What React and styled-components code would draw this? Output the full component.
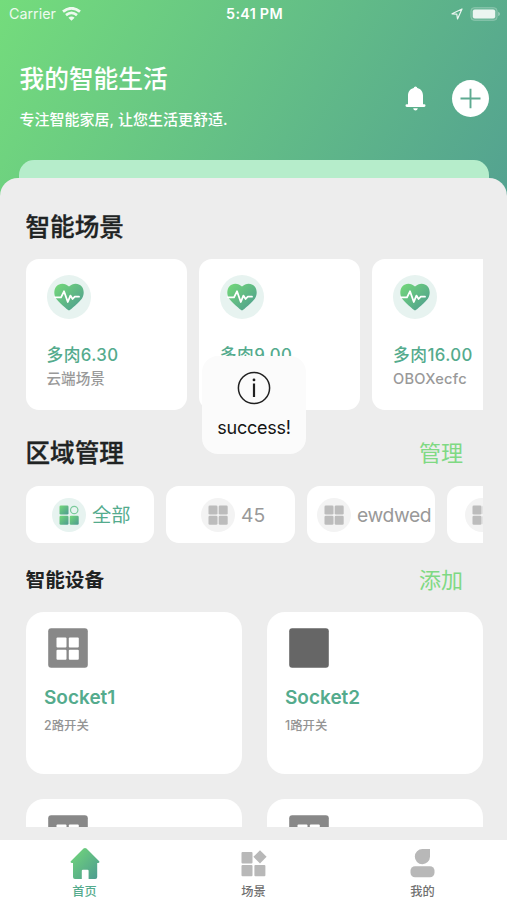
import React from "react";

import styled, { createGlobalStyle } from "styled-components";

const COLOR = {
  green: "#54ab8d",
  light: "#7fd983",
  ink: "#202323",
  gray: "#999999",
  page: "#ededed",
};

const GlobalStyle = createGlobalStyle`
  * {
    box-sizing: border-box;
  }

  body {
    margin: 0;
    font-family: Inter, "Noto Sans CJK SC", sans-serif;
    white-space: nowrap;
  }

  svg {
    display: block;
    flex-shrink: 0;
  }
`;

const Screen = styled.div`
  position: relative;
  display: flex;
  flex-direction: column;
  width: 507px;
  height: 900px;
  overflow: hidden;
  background: linear-gradient(120deg, #74dc7c 0, #54a390 530px);
`;

/* Status bar */
const StatusBar = styled.div`
  display: grid;
  grid-template-columns: 1fr auto 1fr;
  align-items: center;
  height: 28px;
  padding: 0 7px 0 9px;
  color: #fff;
  font-size: 14.3px;
  line-height: 28px;
`;

const StatusSide = styled.div`
  display: flex;
  align-items: center;
  justify-content: ${(props) => (props.$end ? "flex-end" : "flex-start")};
  gap: ${(props) => (props.$end ? "7px" : "6px")};
  opacity: 0.88;
`;

const Clock = styled.div`
  font-size: 14.3px;
  font-weight: 600;
  letter-spacing: 0.3px;
`;

/* Header */
const Header = styled.header`
  display: flex;
  justify-content: space-between;
  height: 132px;
  padding: 34px 18px 0 19.5px;
  color: #fff;
`;

const Title = styled.h1`
  margin: 0;
  font-size: 24.7px;
  font-weight: 500;
  line-height: 34px;
`;

const Slogan = styled.div`
  margin-top: 14px;
  font-size: 15px;
  font-weight: 500;
  line-height: 20px;
`;

const Actions = styled.div`
  display: flex;
  align-items: center;
  gap: 26px;
  height: 73px;
`;

const AddButton = styled.button`
  display: flex;
  align-items: center;
  justify-content: center;
  width: 37px;
  height: 37px;
  padding: 0;
  border: 0;
  border-radius: 50%;
  background: #fff;
`;

/* Sheet */
const SheetEdge = styled.div`
  height: 18px;
  margin: 0 18.5px;
  border-radius: 15px 15px 0 0;
  background: #b6edcb;
`;

const Sheet = styled.main`
  height: 662px;
  padding: 31px 24.5px 13px 25.5px;
  border-radius: 18px 18px 0 0;
  background: ${COLOR.page};
`;

const SheetBody = styled.div`
  height: 618px;
  overflow: hidden;
`;

const SectionHead = styled.div`
  display: flex;
  align-items: center;
  justify-content: space-between;
  height: 36px;
  margin-top: ${(props) => props.$top || 0}px;
  padding-right: 19.5px;
`;

const SectionTitle = styled.h2`
  margin: 0;
  color: ${COLOR.ink};
  font-size: ${(props) => (props.$small ? "19.7px" : "24.6px")};
  font-weight: ${(props) => (props.$small ? 700 : 500)};
  -webkit-text-stroke: ${(props) => (props.$small ? 0 : "0.35px")};
  line-height: 38px;
`;

const SectionLink = styled.a`
  color: ${COLOR.light};
  font-size: 22px;
  line-height: 36px;
`;

const Strip = styled.div`
  display: flex;
  gap: 12px;
  margin-top: ${(props) => props.$top}px;
  overflow: hidden;
`;

const SceneCard = styled.div`
  flex: 0 0 161.3px;
  height: 151px;
  padding: 16px 0 0 21px;
  border-radius: 13px;
  background: #fff;
`;

const Bubble = styled.div`
  display: flex;
  flex-shrink: 0;
  align-items: center;
  justify-content: center;
  width: ${(props) => props.$size}px;
  height: ${(props) => props.$size}px;
  border-radius: 50%;
  background: ${(props) => (props.$muted ? "#f3f3f3" : "#e7f3f0")};
`;

const SceneName = styled.div`
  margin-top: 24px;
  color: ${COLOR.green};
  font-size: 16.8px;
  font-weight: 500;
  letter-spacing: 0.4px;
  line-height: 24px;
`;

const SceneType = styled.div`
  margin-top: 2px;
  color: ${COLOR.gray};
  font-size: 14.6px;
  font-weight: 500;
  letter-spacing: ${(props) => (props.$wide ? "0.25px" : 0)};
  line-height: 20px;
`;

const AreaPill = styled.div`
  display: flex;
  flex: 0 0 128.5px;
  align-items: center;
  gap: 6px;
  height: 57px;
  padding-left: ${(props) => props.$inset}px;
  border-radius: 13px;
  background: #fff;
  color: ${(props) => (props.$active ? COLOR.green : COLOR.gray)};
  font-size: 19.3px;
`;

const AreaName = styled.span`
  letter-spacing: ${(props) => (props.$tight ? "-0.4px" : 0)};
  line-height: 28px;
`;

const Devices = styled.div`
  display: grid;
  grid-template-columns: 1fr 1fr;
  gap: 25px;
  margin-top: 14px;
`;

const DeviceCard = styled.div`
  height: 162px;
  padding: 16px 0 0 18.5px;
  border-radius: 18px;
  background: #fff;

  svg {
    margin-left: 4px;
  }
`;

const DeviceName = styled.div`
  margin-top: 17px;
  color: ${COLOR.green};
  font-size: 19px;
  font-weight: 600;
  line-height: 26px;
`;

const DeviceType = styled.div`
  margin-top: 6px;
  color: #949494;
  font-size: 12.4px;
  font-weight: 500;
  line-height: 18px;
`;

/* Tab bar */
const TabBar = styled.nav`
  display: grid;
  grid-template-columns: repeat(3, 1fr);
  height: 60px;
  background: #fff;
`;

const Tab = styled.div`
  display: flex;
  flex-direction: column;
  align-items: center;
  padding-top: 8px;
  color: ${(props) => (props.$active ? COLOR.green : "#707070")};
  font-size: 12.2px;
  font-weight: 500;
  line-height: 16px;
`;

const TabLabel = styled.div`
  margin-top: 3.5px;
`;

/* Toast */
const Toast = styled.div`
  position: absolute;
  top: 356px;
  left: 202px;
  display: flex;
  flex-direction: column;
  align-items: center;
  width: 104px;
  height: 98px;
  padding-top: 15px;
  border-radius: 16px;
  background: #fbfbfb;
  color: #151515;
  font-size: 18px;
  line-height: 24px;
`;

const ToastText = styled.div`
  margin-top: 11px;
  letter-spacing: -0.25px;
`;

const Gradients = () => (
  <svg width="0" height="0">
    <linearGradient id="leaf" x1="0" y1="0" x2="1" y2="1">
      <stop offset="0" stopColor="#74d979" />
      <stop offset="1" stopColor="#4c9a91" />
    </linearGradient>
  </svg>
);

const WifiIcon = () => (
  <svg width="19" height="14" viewBox="0 0 19 14" fill="none" stroke="#fff" strokeWidth="2.8">
    <path d="M1 4.6Q9.5-2 18 4.6" />
    <path d="M4 8.1Q9.5 3.7 15 8.1" />
    <path d="M6.4 10.8Q9.5 8.2 12.6 10.8L9.5 13.7Z" fill="#fff" stroke="none" />
  </svg>
);

const LocationIcon = () => (
  <svg width="12" height="12" viewBox="0 0 12 12" fill="none" stroke="#fff" strokeWidth="1.2" strokeLinejoin="round">
    <path d="M1 5.8L11 1L6.5 11L5.8 6.2Z" />
  </svg>
);

const BatteryIcon = () => (
  <svg width="30" height="14" viewBox="0 0 30 14">
    <rect x="0.8" y="0.6" width="26.4" height="12.8" rx="3.5" fill="#fff" fillOpacity="0.15" stroke="#fff" strokeOpacity="0.25" />
    <rect x="2.8" y="2.4" width="22.4" height="9.2" rx="2" fill="#fff" />
    <path d="M28.2 4.8Q30 5.5 30 7T28.2 9.2Z" fill="#fff" fillOpacity="0.45" />
  </svg>
);

const BellIcon = () => (
  <svg width="21" height="25" viewBox="0 0 21 25" fill="#fff">
    <path d="M10.5 0.4a1.8 1.8 0 0 1 1.8 1.6C16 3 18 5.8 18 9.5v8.8h1.2a1.3 1.3 0 0 1 0 2.6H1.8a1.3 1.3 0 0 1 0-2.6H3V9.5C3 5.8 5 3 8.7 2A1.8 1.8 0 0 1 10.5 0.4Z" />
    <path d="M8.2 22.2h4.6q-0.4 2.2-2.3 2.2t-2.3-2.2Z" />
  </svg>
);

const PlusIcon = () => (
  <svg width="21" height="21" viewBox="0 0 21 21" stroke="#5eaa91" strokeWidth="1.9">
    <path d="M10.5 0.8V20.2M0.5 10.5H20.5" />
  </svg>
);

const HeartIcon = () => (
  <svg width="30" height="28" viewBox="0 0 30 28">
    <path
      d="M15 27.4C13.7 27.4 3.8 18.3 2 15.5C-0.3 12-0.3 6.8 2.3 3.5C5.5-0.4 11.5-0.1 15 3.6C18.5-0.1 24.5-0.4 27.7 3.5C30.3 6.8 30.3 12 28 15.5C26.2 18.3 16.3 27.4 15 27.4Z"
      fill="url(#leaf)"
    />
    <path
      d="M1 14.3H7L10 8.3L13.8 19L16.4 12.6L18.6 16L20.8 13.7H25"
      fill="none"
      stroke="#fff"
      strokeWidth="1.8"
      strokeLinecap="round"
      strokeLinejoin="round"
    />
  </svg>
);

const AreaIcon = ({ active }) => (
  <svg width="20" height="20" viewBox="0 0 20 20" fill={active ? "url(#leaf)" : "#bcbcbc"}>
    <rect x="0.5" y="0.5" width="9" height="9" rx="1.3" />
    {active ? (
      <circle cx="15.2" cy="5" r="3.7" fill="none" stroke="#7ccb9c" strokeWidth="1.2" />
    ) : (
      <rect x="10.7" y="0.5" width="9" height="9" rx="1.3" />
    )}
    <rect x="0.5" y="10.7" width="9" height="9" rx="1.3" />
    <rect x="10.7" y="10.7" width="9" height="9" rx="1.3" />
  </svg>
);

const SocketIcon = ({ blank }) => (
  <svg width="40" height="40" viewBox="0 0 40 40">
    <rect x="0.2" y="0.2" width="39.6" height="39.6" rx="3" fill={blank ? "#666" : "#888"} />
    {!blank && (
      <g fill="#fff">
        <rect x="8.5" y="9.5" width="10" height="10" rx="1" />
        <rect x="20.8" y="9.5" width="10" height="10" rx="1" />
        <rect x="8.5" y="21.7" width="10" height="10" rx="1" />
        <rect x="20.8" y="21.7" width="10" height="10" rx="1" />
      </g>
    )}
  </svg>
);

const InfoIcon = () => (
  <svg width="34" height="34" viewBox="0 0 34 34" fill="none" stroke="#202020">
    <circle cx="17" cy="17" r="15.6" strokeWidth="1.5" />
    <path d="M17 12.5V26" strokeWidth="2.2" />
    <circle cx="17" cy="8.9" r="1.4" fill="#202020" stroke="none" />
  </svg>
);

const HomeIcon = () => (
  <svg width="30" height="32" viewBox="0 0 30 32">
    <path
      d="M13.5 0.6Q15 -0.4 16.5 0.6L29.2 13.2Q30 14.7 28.3 15H27.2V29Q27.2 31 25.2 31H18.6V22.8Q18.6 21.7 17.5 21.7H12.9Q11.8 21.7 11.8 22.8V31H5Q3 31 3 29V15H1.7Q0 14.7 0.8 13.2Z"
      fill="url(#leaf)"
    />
  </svg>
);

const SceneIcon = () => (
  <svg width="26" height="32" viewBox="0 0 26 32" fill="#b8b8b8">
    <rect x="0.5" y="4" width="11" height="11.5" rx="1" />
    <rect x="0.5" y="17" width="11" height="11.3" rx="1" />
    <rect x="13.4" y="17" width="11" height="11.3" rx="1" />
    <path d="M19 2.2L25.6 8.8L19 15.4L12.4 8.8Z" />
  </svg>
);

const UserIcon = () => (
  <svg width="25" height="32" viewBox="0 0 25 32" fill="#b8b8b8">
    <path d="M12.4 1H20V8.8A7.6 7.6 0 1 1 12.4 1Z" />
    <rect x="0.5" y="18.3" width="24" height="11" rx="4.5" />
  </svg>
);

const scenes = [
  { name: "多肉6.30", type: "云端场景" },
  { name: "多肉9.00", type: "" },
  { name: "多肉16.00", type: "OBOXecfc", wide: true },
];

const areas = [
  { name: "全部", inset: 26.5, active: true },
  { name: "45", inset: 35 },
  { name: "ewdwed", inset: 10.5, tight: true },
  { name: "", inset: 17.5 },
];

const devices = [
  { name: "Socket1", type: "2路开关" },
  { name: "Socket2", type: "1路开关", blank: true },
  { name: "", type: "" },
  { name: "", type: "" },
];

const tabs = [
  { label: "首页", Icon: HomeIcon, active: true },
  { label: "场景", Icon: SceneIcon },
  { label: "我的", Icon: UserIcon },
];

function App() {
  return (
    <Screen>
      <GlobalStyle />
      <Gradients />
      <StatusBar>
        <StatusSide>
          Carrier
          <WifiIcon />
        </StatusSide>
        <Clock>5:41 PM</Clock>
        <StatusSide $end>
          <LocationIcon />
          <BatteryIcon />
        </StatusSide>
      </StatusBar>

      <Header>
        <div>
          <Title>我的智能生活</Title>
          <Slogan>专注智能家居, 让您生活更舒适.</Slogan>
        </div>
        <Actions>
          <BellIcon />
          <AddButton>
            <PlusIcon />
          </AddButton>
        </Actions>
      </Header>

      <SheetEdge />
      <Sheet>
        <SheetBody>
          <SectionHead>
            <SectionTitle>智能场景</SectionTitle>
          </SectionHead>
          <Strip $top={14}>
            {scenes.map((scene) => (
              <SceneCard key={scene.name}>
                <Bubble $size={44}>
                  <HeartIcon />
                </Bubble>
                <SceneName>{scene.name}</SceneName>
                <SceneType $wide={scene.wide}>{scene.type}</SceneType>
              </SceneCard>
            ))}
          </Strip>

          <SectionHead $top={25}>
            <SectionTitle>区域管理</SectionTitle>
            <SectionLink>管理</SectionLink>
          </SectionHead>
          <Strip $top={15}>
            {areas.map((area) => (
              <AreaPill key={area.inset} $inset={area.inset} $active={area.active}>
                <Bubble $size={34} $muted={!area.active}>
                  <AreaIcon active={area.active} />
                </Bubble>
                <AreaName $tight={area.tight}>{area.name}</AreaName>
              </AreaPill>
            ))}
          </Strip>

          <SectionHead $top={19}>
            <SectionTitle $small>智能设备</SectionTitle>
            <SectionLink>添加</SectionLink>
          </SectionHead>
          <Devices>
            {devices.map((device, i) => (
              <DeviceCard key={i}>
                <SocketIcon blank={device.blank} />
                <DeviceName>{device.name}</DeviceName>
                <DeviceType>{device.type}</DeviceType>
              </DeviceCard>
            ))}
          </Devices>
        </SheetBody>
      </Sheet>

      <TabBar>
        {tabs.map(({ label, Icon, active }) => (
          <Tab key={label} $active={active}>
            <Icon />
            <TabLabel>{label}</TabLabel>
          </Tab>
        ))}
      </TabBar>

      <Toast>
        <InfoIcon />
        <ToastText>success!</ToastText>
      </Toast>
    </Screen>
  );
}

export default App;
